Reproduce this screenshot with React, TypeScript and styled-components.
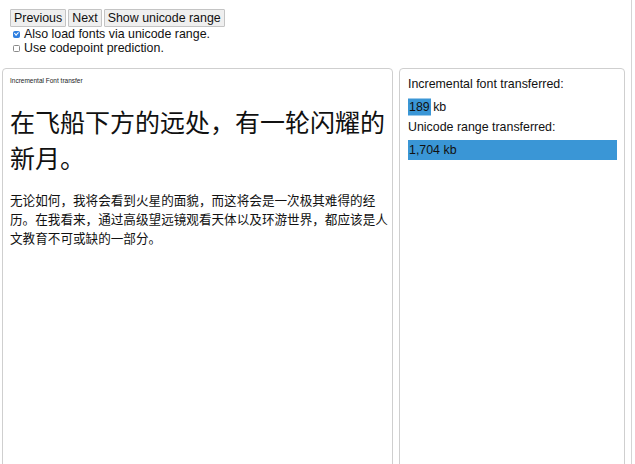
import React, { useState } from 'react';
import styled, { createGlobalStyle } from 'styled-components';

const GlobalStyle = createGlobalStyle`
  html, body {
    margin: 0;
    padding: 0;
    background: #fff;
  }
  body {
    font-family: "Liberation Sans", Arial, sans-serif;
    color: #111;
  }
`;

const SPage = styled.div`
  width: 631px;
  height: 100vh;
  border-right: 1px solid #d4d4d4;
  overflow: hidden;
`;

const SControls = styled.div`
  padding: 9px 0 0 10px;
`;

const SButtonRow = styled.div`
  display: flex;
  gap: 2px;
`;

const SButton = styled.button`
  font-family: "Liberation Sans", Arial, sans-serif;
  font-size: 12.4px;
  height: 18px;
  line-height: 14px;
  padding: 0 3px;
  margin: 0;
  background: #efefef;
  color: #111;
  border: 1px solid #c4c4c4;
  border-radius: 1px;
  cursor: pointer;
`;

const SCheckRow = styled.label`
  display: flex;
  align-items: center;
  height: 14px;
  font-size: 12.4px;
  line-height: 14px;
`;

const SCheck = styled.input`
  appearance: none;
  position: relative;
  box-sizing: border-box;
  width: 7px;
  height: 7px;
  margin: 0 4px 0 3px;
  border: 1px solid #8a8a8a;
  border-radius: 1.5px;
  background: #fff;
  &:checked {
    background: #2f7fe0;
    border-color: #2f7fe0;
  }
  &:checked::after {
    content: '';
    position: absolute;
    left: 1px;
    top: -0.5px;
    width: 1.5px;
    height: 3px;
    border: solid #fff;
    border-width: 0 1px 1px 0;
    transform: rotate(45deg);
  }
`;

const SPanels = styled.div`
  display: flex;
  gap: 6px;
  margin: 13px 0 0 2px;
`;

const SPanel = styled.div<{ $width: number }>`
  box-sizing: border-box;
  width: ${(p) => p.$width}px;
  height: 430px;
  border: 1px solid #cfcfcf;
  border-radius: 4px;
`;

const STextPanel = styled(SPanel)`
  padding: 7px 1px 0 7px;
`;

const SStatsPanel = styled(SPanel)`
  padding: 8px 7px 0 8px;
`;

const STinyTitle = styled.div`
  font-size: 6.5px;
  line-height: 9px;
  color: #222;
`;

const SHeadline = styled.h1`
  margin: 18px 0 0;
  font-family: "Noto Sans CJK SC", "Liberation Sans", sans-serif;
  font-weight: 400;
  font-size: 25px;
  line-height: 36px;
  color: #111;
`;

const SParagraph = styled.p`
  margin: 15px 0 0;
  font-family: "Noto Sans CJK SC", "Liberation Sans", sans-serif;
  font-size: 12.6px;
  line-height: 19px;
  color: #111;
`;

const SLabel = styled.div`
  font-size: 12.4px;
  line-height: 15px;
  margin-bottom: 5px;
`;

const SBarRow = styled.div`
  position: relative;
  height: 20px;
  display: flex;
  align-items: center;
  margin-bottom: 3px;
`;

const SBarFill = styled.div<{ $h: number }>`
  position: absolute;
  left: 0;
  top: 50%;
  height: ${(p) => p.$h}px;
  transform: translateY(-50%);
  background: #3a96d6;
`;

const SBarText = styled.span`
  position: relative;
  padding-left: 1px;
  font-size: 12.4px;
  line-height: 15px;
  color: #111;
`;

const stats = [
  { label: 'Incremental font transferred:', kb: 189, h: 17 },
  { label: 'Unicode range transferred:', kb: 1704, h: 20 },
];

const maxKb = Math.max(...stats.map((s) => s.kb));

export default function App() {
  const [useRange, setUseRange] = useState(true);
  const [usePrediction, setUsePrediction] = useState(false);

  return (
    <SPage>
      <GlobalStyle />
      <SControls>
        <SButtonRow>
          <SButton>Previous</SButton>
          <SButton>Next</SButton>
          <SButton>Show unicode range</SButton>
        </SButtonRow>
        <SCheckRow>
          <SCheck type="checkbox" checked={useRange} onChange={() => setUseRange(!useRange)} />
          Also load fonts via unicode range.
        </SCheckRow>
        <SCheckRow>
          <SCheck
            type="checkbox"
            checked={usePrediction}
            onChange={() => setUsePrediction(!usePrediction)}
          />
          Use codepoint prediction.
        </SCheckRow>
      </SControls>

      <SPanels>
        <STextPanel $width={391}>
          <STinyTitle>Incremental Font transfer</STinyTitle>
          <SHeadline>在飞船下方的远处，有一轮闪耀的新月。</SHeadline>
          <SParagraph>
            无论如何，我将会看到火星的面貌，而这将会是一次极其难得的经历。在我看来，通过高级望远镜观看天体以及环游世界，都应该是人文教育不可或缺的一部分。
          </SParagraph>
        </STextPanel>

        <SStatsPanel $width={226}>
          {stats.map((s) => (
            <div key={s.label}>
              <SLabel>{s.label}</SLabel>
              <SBarRow>
                <SBarFill $h={s.h} style={{ width: `${(s.kb / maxKb) * 100}%` }} />
                <SBarText>{s.kb.toLocaleString('en-US')} kb</SBarText>
              </SBarRow>
            </div>
          ))}
        </SStatsPanel>
      </SPanels>
    </SPage>
  );
}
